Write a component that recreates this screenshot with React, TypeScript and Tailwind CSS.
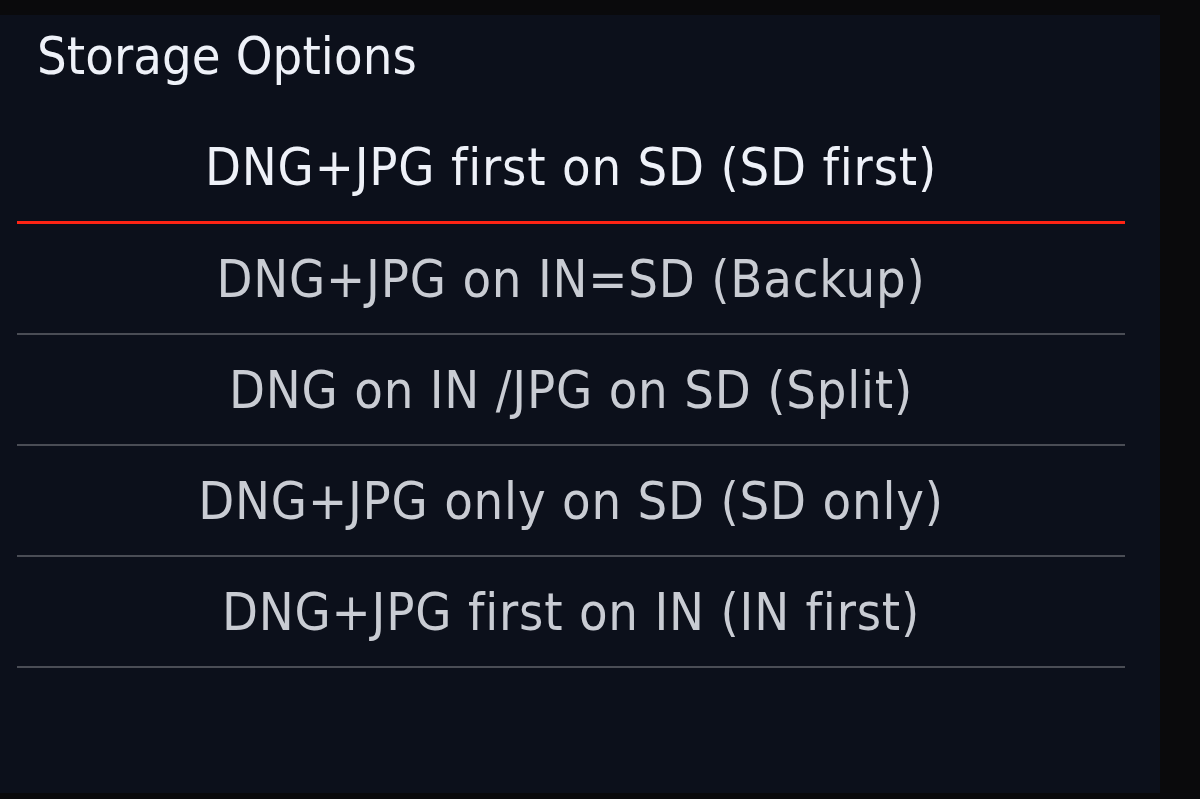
const options = [
  "DNG+JPG first on SD (SD first)",
  "DNG+JPG on IN=SD (Backup)",
  "DNG on IN /JPG on SD (Split)",
  "DNG+JPG only on SD (SD only)",
  "DNG+JPG first on IN (IN first)",
];

export default function App() {
  const selected = 0;
  return (
    <div className="w-[1200px] h-[799px] bg-[#0a0a0c] pt-[15px] pr-[40px] pb-[6px] flex">
      <div
        className="flex-1 bg-[#0c101b] flex flex-col"
        style={{ fontFamily: '"DejaVu Sans", "Liberation Sans", sans-serif', fontStretch: "condensed" }}
      >
        <div className="h-[98px] pl-[37px] pt-[11px] text-[52px] leading-[60px] text-[#eef1f8] tracking-[0.1px]">
          Storage Options
        </div>
        <ul className="ml-[17px] w-[1108px]">
          {options.map((o, i) => (
            <li
              key={o}
              className={
                i === selected
                  ? "h-[111px] flex items-center justify-center border-b-[3px] border-[#ff2414] text-[#eef1f8]"
                  : "h-[111px] flex items-center justify-center border-b-2 border-[#4a4d55] text-[#c9ccd3]"
              }
            >
              <span className="text-[52px] leading-none tracking-[0.8px]">{o}</span>
            </li>
          ))}
        </ul>
      </div>
    </div>
  );
}
